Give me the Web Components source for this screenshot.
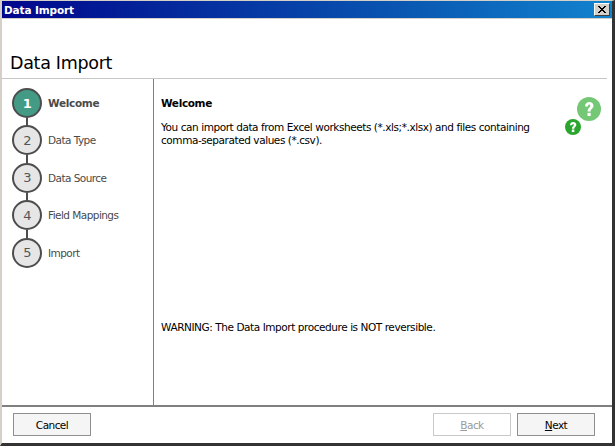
<!DOCTYPE html>
<html>
<head>
<meta charset="utf-8">
<title>Data Import</title>
<style>
html, body { margin: 0; height: 100%; background: #fff; }
body { font-family: "DejaVu Sans", sans-serif; }
</style>
</head>
<body>
<import-dialog>
    <wizard-step num="1" active>Welcome</wizard-step>
    <wizard-step num="2">Data Type</wizard-step>
    <wizard-step num="3">Data Source</wizard-step>
    <wizard-step num="4">Field Mappings</wizard-step>
    <wizard-step num="5" last>Import</wizard-step>
</import-dialog>
<script>
class WizardStep extends HTMLElement {
    constructor() {
        super()
        this.shadowDOM = this.attachShadow({mode : "open"})
    }
    connectedCallback() {
        this.shadowDOM.innerHTML = `
            <style>
            :host {
                display: flex;
                align-items: center;
                height: 30px;
                margin-bottom: 7.4px;
                position: relative;
                font-size: 10.5px;
                color: #4a4a4a;
                letter-spacing: -0.55px;
            }
            .num {
                box-sizing: border-box;
                width: 30px;
                height: 30px;
                border-radius: 50%;
                border: 2px solid #4d4d4d;
                background: #e6e6e6;
                display: flex;
                align-items: center;
                justify-content: center;
                font-size: 13px;
                color: #555;
                margin-right: 6px;
                flex: none;
            }
            :host([active]) .num { background: #439b85; color: #fff; font-weight: bold; }
            :host([active]) { font-weight: bold; letter-spacing: -0.3px; }
            .stem {
                position: absolute;
                left: 14px;
                top: 30px;
                width: 2px;
                height: 8px;
                background: #4d4d4d;
            }
            :host([last]) .stem { display: none; }
            </style>
            <span class="num">${this.getAttribute("num")}</span>
            <span class="label"><slot></slot></span>
            <span class="stem"></span>
        `
    }
}
customElements.define("wizard-step", WizardStep)

class WizButton extends HTMLElement {
    constructor() {
        super()
        this.shadowDOM = this.attachShadow({mode : "open"})
    }
    connectedCallback() {
        this.shadowDOM.innerHTML = `
            <style>
            :host {
                box-sizing: border-box;
                display: flex;
                align-items: center;
                justify-content: center;
                width: 78px;
                height: 23px;
                border: 1px solid #8f8f8f;
                background: #f5f5f5;
                color: #000;
                font-size: 10.5px;
                letter-spacing: -0.55px;
            }
            :host([disabled]) {
                border-color: #c9c9c9;
                background: #fff;
                color: #9a9a9a;
            }
            </style>
            <slot></slot>
        `
    }
}
customElements.define("wiz-button", WizButton)

class ImportDialog extends HTMLElement {
    constructor() {
        super()
        this.shadowDOM = this.attachShadow({mode : "open"})
    }
    connectedCallback() {
        this.shadowDOM.innerHTML = `
            <style>
            :host {
                display: flex;
                flex-direction: column;
                box-sizing: border-box;
                width: 615px;
                height: 446px;
                overflow: hidden;
                border-top: 1px solid #d4d0c8;
                border-left: 2px solid #d4d0c8;
                border-right: 3px solid #333;
                border-bottom: 3px solid #333;
                background: #fff;
                color: #000;
            }
            .title {
                height: 17px;
                flex: none;
                display: flex;
                align-items: center;
                justify-content: space-between;
                padding: 0 2px 0 2px;
                background: linear-gradient(90deg, #00068c 0%, #0a5cb4 70%, #1283cf 100%);
                color: #fff;
                font-size: 10.5px;
                font-weight: bold;
                letter-spacing: -0.12px;
                border-bottom: 1px solid #d4d0c8;
            }
            .close {
                box-sizing: border-box;
                width: 16px;
                height: 13px;
                background: #d4d0c8;
                border: 1px solid;
                border-color: #fff #404040 #404040 #fff;
                display: flex;
                align-items: center;
                justify-content: center;
            }
            .head {
                height: 60px;
                flex: none;
                box-sizing: border-box;
                display: flex;
                align-items: flex-end;
                padding: 0 8px 6px;
                font-size: 17.5px;
                letter-spacing: -0.3px;
                position: relative;
            }
            .head::after {
                content: "";
                position: absolute;
                left: 0;
                right: 5px;
                bottom: 0;
                height: 1px;
                background: #c6c6c6;
            }
            .mid {
                flex: 1;
                display: flex;
                min-height: 0;
            }
            .side {
                box-sizing: border-box;
                width: 152px;
                flex: none;
                padding: 9px 0 0 10px;
                border-right: 1px solid #808080;
            }
            .main {
                flex: 1;
                position: relative;
                display: flex;
                flex-direction: column;
                padding: 18px 60px 0 7px;
                font-size: 10.5px;
                letter-spacing: -0.43px;
                line-height: 13px;
            }
            .main h2 {
                margin: 0 0 11px;
                font-size: 10.5px;
                line-height: 13px;
                letter-spacing: -0.35px;
            }
            .main p { margin: 0; white-space: pre-line; }
            .main .warn { margin-top: auto; margin-bottom: 71px; }
            .help { position: absolute; display: block; }
            .big { left: 423px; top: 18px; }
            .small { left: 411px; top: 40px; }
            .foot {
                height: 38px;
                flex: none;
                box-sizing: border-box;
                display: flex;
                align-items: flex-start;
                padding: 6px 17px 0 11px;
                gap: 6px;
                border-top: 2px solid #808080;
            }
            .spacer { flex: 1; }
            </style>
            <div class="title">
                <span>Data Import</span>
                <span class="close">
                    <svg width="8" height="7" viewBox="0 0 8 7"><path d="M0 0 L7 7 M1 0 L8 7 M7 0 L0 7 M8 0 L1 7" stroke="#000" stroke-width="1"/></svg>
                </span>
            </div>
            <div class="head">Data Import</div>
            <div class="mid">
                <div class="side"><slot></slot></div>
                <div class="main">
                    <h2>Welcome</h2>
                    <p>You can import data from Excel worksheets (*.xls;*.xlsx) and files containing
comma-separated values (*.csv).</p>
                    <p class="warn">WARNING: The Data Import procedure is NOT reversible.</p>
                    <svg class="help big" width="24" height="24" viewBox="0 0 24 24">
                        <circle cx="12" cy="12" r="12" fill="#74c774"/>
                        <path d="M8 9.5 C8 6.5 10 5 12.2 5 C14.8 5 16.5 6.6 16.5 8.8 C16.5 11.6 13.6 11.8 13.6 14.4 L10.6 14.4 C10.6 10.8 13.2 10.6 13.2 8.9 C13.2 8 12.8 7.5 12.1 7.5 C11.4 7.5 11 8.2 11 9.5 Z" fill="#fff"/>
                        <rect x="10.5" y="15.8" width="3.2" height="3.2" fill="#fff"/>
                    </svg>
                    <svg class="help small" width="16" height="16" viewBox="0 0 24 24">
                        <circle cx="12" cy="12" r="12" fill="#2aa52e"/>
                        <path d="M7.5 9.5 C7.5 6 9.8 4.5 12.2 4.5 C15 4.5 17 6.2 17 8.8 C17 11.8 14 12 14 14.6 L10.4 14.6 C10.4 10.8 13.2 10.6 13.2 8.9 C13.2 8 12.8 7.5 12.1 7.5 C11.4 7.5 11 8.2 11 9.5 Z" fill="#fff"/>
                        <rect x="10.2" y="15.8" width="3.8" height="3.8" fill="#fff"/>
                    </svg>
                </div>
            </div>
            <div class="foot">
                <wiz-button>Cancel</wiz-button>
                <span class="spacer"></span>
                <wiz-button disabled><u>B</u>ack</wiz-button>
                <wiz-button><u>N</u>ext</wiz-button>
            </div>
        `
    }
}
customElements.define("import-dialog", ImportDialog)
</script>
</body>
</html>
